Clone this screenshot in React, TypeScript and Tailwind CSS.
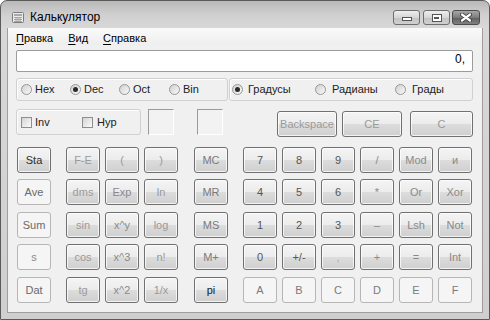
import { FC } from 'react'

type K = [string, string, boolean?]

const keyOn =
  'rounded-[3px] border border-[#707070] bg-[linear-gradient(to_bottom,#f4f4f4_0%,#ececec_48%,#dcdcdc_52%,#cfcfcf_100%)] shadow-[inset_0_0_0_1px_rgba(255,255,255,0.75)]'
const keyOff = 'rounded-[3px] border border-[#b6b6b6] bg-[#f5f5f5]'

const Key: FC<{ k: K; w?: string }> = ({ k, w = 'w-[34px]' }) => (
  <button
    className={`flex h-[26px] ${w} shrink-0 items-center justify-center text-[11px] leading-none ${k[1]} ${
      k[2] ? keyOff : keyOn
    }`}
  >
    {k[0]}
  </button>
)

const rows: { stat: K; fn: K[]; mem: K; pad: K[]; gap: string }[] = [
  {
    gap: '',
    stat: ['Sta', 'text-[#2e2e2e]'],
    fn: [['F-E', 'text-[#9a9a9a]'], ['(', 'text-[#9a9a9a]'], [')', 'text-[#9a9a9a]']],
    mem: ['MC', 'text-[#7a7a7a]'],
    pad: [['7', 'text-[#555]'], ['8', 'text-[#555]'], ['9', 'text-[#555]'], ['/', 'text-[#8a8a8a]'], ['Mod', 'text-[#8a8a8a]'], ['и', 'text-[#8a8a8a]']],
  },
  {
    gap: 'mt-[6px]',
    stat: ['Ave', 'text-[#6a6a6a]', true],
    fn: [['dms', 'text-[#9a9a9a]'], ['Exp', 'text-[#8a8a8a]'], ['ln', 'text-[#9a9a9a]']],
    mem: ['MR', 'text-[#7a7a7a]'],
    pad: [['4', 'text-[#555]'], ['5', 'text-[#555]'], ['6', 'text-[#555]'], ['*', 'text-[#8a8a8a]'], ['Or', 'text-[#8a8a8a]'], ['Xor', 'text-[#8a8a8a]']],
  },
  {
    gap: 'mt-[7px]',
    stat: ['Sum', 'text-[#6a6a6a]', true],
    fn: [['sin', 'text-[#9a9a9a]'], ['x^y', 'text-[#8a8a8a]'], ['log', 'text-[#9a9a9a]']],
    mem: ['MS', 'text-[#7a7a7a]'],
    pad: [['1', 'text-[#555]'], ['2', 'text-[#555]'], ['3', 'text-[#555]'], ['–', 'text-[#8a8a8a]'], ['Lsh', 'text-[#8a8a8a]'], ['Not', 'text-[#8a8a8a]']],
  },
  {
    gap: 'mt-[6px]',
    stat: ['s', 'text-[#8a8a8a]', true],
    fn: [['cos', 'text-[#9a9a9a]'], ['x^3', 'text-[#8a8a8a]'], ['n!', 'text-[#9a9a9a]']],
    mem: ['M+', 'text-[#7a7a7a]'],
    pad: [['0', 'text-[#555]'], ['+/-', 'text-[#555]'], [',', 'text-[#aaa]'], ['+', 'text-[#8a8a8a]'], ['=', 'text-[#8a8a8a]'], ['Int', 'text-[#8a8a8a]']],
  },
  {
    gap: 'mt-[7px]',
    stat: ['Dat', 'text-[#6a6a6a]', true],
    fn: [['tg', 'text-[#9a9a9a]'], ['x^2', 'text-[#8a8a8a]'], ['1/x', 'text-[#9a9a9a]']],
    mem: ['pi', 'text-[#1a1a1a]'],
    pad: [['A', 'text-[#7a7a7a]', true], ['B', 'text-[#7a7a7a]', true], ['C', 'text-[#7a7a7a]', true], ['D', 'text-[#7a7a7a]', true], ['E', 'text-[#7a7a7a]', true], ['F', 'text-[#7a7a7a]', true]],
  },
]

const Radio: FC<{ on?: boolean }> = ({ on }) => (
  <span className="flex h-[11px] w-[11px] shrink-0 items-center justify-center rounded-full border border-[#979797] bg-[linear-gradient(135deg,#d0d0d0,#f9f9f9)]">
    {on && <span className="h-[5px] w-[5px] rounded-full bg-[#2a2a2a]" />}
  </span>
)

const Check: FC = () => (
  <span className="h-[11px] w-[11px] shrink-0 border border-[#8e8e8e] bg-[linear-gradient(135deg,#d4d4d4,#fbfbfb)]" />
)

const CalcIcon: FC = () => (
  <svg width="12" height="11" viewBox="0 0 12 11" className="ml-[11px] mt-[11px] shrink-0">
    <rect x="0.5" y="0.5" width="11" height="10" rx="1" fill="#ececec" stroke="#7c7c7c" />
    <rect x="2" y="2" width="8" height="2" fill="#a8a8a8" />
    <path d="M2 5.5h8M2 7.5h8M2 9.5h8M4 5v5M6 5v5M8 5v5" stroke="#9a9a9a" strokeWidth="0.8" />
  </svg>
)

const App: FC = () => {
  return (
    <div className="h-[320px] w-[490px] overflow-hidden bg-white font-['Liberation_Sans',Arial,sans-serif] text-[11px] text-black">
      <div className="flex h-full flex-col rounded-t-[7px] border border-[#5a5a5a] bg-[linear-gradient(to_bottom,#b9b9b9_0px,#d0d0d0_14px,#d8d8d8_27px,#cfcfcf_100%)]">
        {/* title bar */}
        <div className="flex h-[27px] shrink-0 items-start">
          <CalcIcon />
          <span className="ml-[6px] mt-[9px] text-[12px] leading-[15px]">Калькулятор</span>
          <div className="ml-auto mr-[9px] mt-[9px] flex">
            <div className="flex h-[15px] w-[27px] items-end justify-center rounded-[3px] border border-[#6e6e6e] bg-[linear-gradient(to_bottom,#eeeeee,#d6d6d6_50%,#c2c2c2_51%,#d0d0d0)] pb-[3px]">
              <span className="h-[4px] w-[10px] border border-[#555] bg-white" />
            </div>
            <div className="ml-[3px] flex h-[15px] w-[27px] items-center justify-center rounded-[3px] border border-[#6e6e6e] bg-[linear-gradient(to_bottom,#eeeeee,#d6d6d6_50%,#c2c2c2_51%,#d0d0d0)]">
              <span className="flex h-[8px] w-[10px] items-center justify-center border border-[#555] bg-white">
                <span className="h-[2px] w-[5px] border border-[#555]" />
              </span>
            </div>
            <div className="ml-[2px] flex h-[15px] w-[28px] items-center justify-center rounded-[3px] border border-[#4c4c4c] bg-[linear-gradient(to_bottom,#a8a8a8,#7c7c7c_50%,#5e5e5e_51%,#808080)]">
              <svg width="12" height="9" viewBox="0 0 12 9">
                <path d="M2 1.5l8 6M10 1.5l-8 6" stroke="#3c3c3c" strokeWidth="4" strokeLinecap="round" />
                <path d="M2 1.5l8 6M10 1.5l-8 6" stroke="#fff" strokeWidth="2.2" strokeLinecap="round" />
              </svg>
            </div>
          </div>
        </div>

        <div className="mx-[6px] mb-[6px] flex flex-1 flex-col border-x border-b border-[#9e9e9e] bg-[#f0f0f0]">
          {/* menu */}
          <div className="flex h-[17px] shrink-0 gap-[15px] bg-[linear-gradient(to_bottom,#fafafa,#eeeeee)] pl-[8px] pt-[3px] leading-[15px]">
            <span>
              <span className="underline underline-offset-[2px]">П</span>равка
            </span>
            <span>
              <span className="underline underline-offset-[2px]">В</span>ид
            </span>
            <span>
              <span className="underline underline-offset-[2px]">С</span>правка
            </span>
          </div>

          <div className="flex flex-col pl-[8px] pr-[9px] pt-[5px]">
            {/* display */}
            <div className="flex h-[22px] justify-end rounded-[2px] border border-[#9c9c9c] bg-white pr-[7px] text-[12px] leading-[16px]">
              0,
            </div>

            {/* number system / angle units */}
            <div className="mt-[6px] flex h-[23px] gap-[1px]">
              <div className="flex w-[212px] items-center rounded-[3px] border border-[#d0d0d0] pl-[4px] shadow-[inset_1px_1px_0_#fff]">
                {[['Hex', false], ['Dec', true], ['Oct', false], ['Bin', false]].map(([t, on], i) => (
                  <span key={i} className={`flex items-center gap-[3px] ${i === 2 ? 'w-[50px]' : 'w-[49px]'}`}>
                    <Radio on={on as boolean} />
                    <span className="text-[#222]">{t}</span>
                  </span>
                ))}
              </div>
              <div className="flex flex-1 items-center rounded-[3px] border border-[#d0d0d0] pl-[2px] shadow-[inset_1px_1px_0_#fff]">
                <span className="flex w-[83px] items-center gap-[5px]">
                  <Radio on />
                  <span className="text-[#222]">Градусы</span>
                </span>
                <span className="flex w-[80px] items-center gap-[6px]">
                  <Radio />
                  <span className="text-[#222]">Радианы</span>
                </span>
                <span className="flex items-center gap-[6px]">
                  <Radio />
                  <span className="text-[#222]">Грады</span>
                </span>
              </div>
            </div>

            {/* inv / hyp, indicators, clear keys */}
            <div className="mt-[8px] flex h-[28px] items-start">
              <div className="flex h-[26px] w-[125px] items-center rounded-[3px] border border-[#d0d0d0] pl-[4px] shadow-[inset_1px_1px_0_#fff]">
                <span className="flex w-[61px] items-center gap-[3px]">
                  <Check />
                  <span className="text-[#222]">Inv</span>
                </span>
                <span className="flex items-center gap-[4px]">
                  <Check />
                  <span className="text-[#222]">Hyp</span>
                </span>
              </div>
              <div className="ml-[7px] h-[26px] w-[26px] border border-b-white border-l-[#9a9a9a] border-r-white border-t-[#9a9a9a] bg-[#f2f2f2]" />
              <div className="ml-[23px] h-[26px] w-[26px] border border-b-white border-l-[#9a9a9a] border-r-white border-t-[#9a9a9a] bg-[#f2f2f2]" />
              <div className="ml-[54px] mt-[2px] flex">
                <Key k={['Backspace', 'text-[#9a9a9a]']} w="w-[60px]" />
                <div className="ml-[5px]">
                  <Key k={['CE', 'text-[#9a9a9a]']} w="w-[60px]" />
                </div>
                <div className="ml-[8px]">
                  <Key k={['C', 'text-[#9a9a9a]']} w="w-[63px]" />
                </div>
              </div>
            </div>

            {/* keypad */}
            <div className="mt-[10px] flex flex-col pl-[1px]">
              {rows.map((r, i) => (
                <div key={i} className={`flex ${r.gap}`}>
                  <Key k={r.stat} />
                  <div className="ml-[15px] flex gap-[5px]">
                    {r.fn.map((k) => (
                      <Key key={k[0]} k={k} />
                    ))}
                  </div>
                  <div className="ml-[16px]">
                    <Key k={r.mem} />
                  </div>
                  <div className="ml-[15px] flex gap-[5px]">
                    {r.pad.map((k) => (
                      <Key key={k[0]} k={k} />
                    ))}
                  </div>
                </div>
              ))}
            </div>
          </div>
        </div>
      </div>
    </div>
  )
}

export default App
